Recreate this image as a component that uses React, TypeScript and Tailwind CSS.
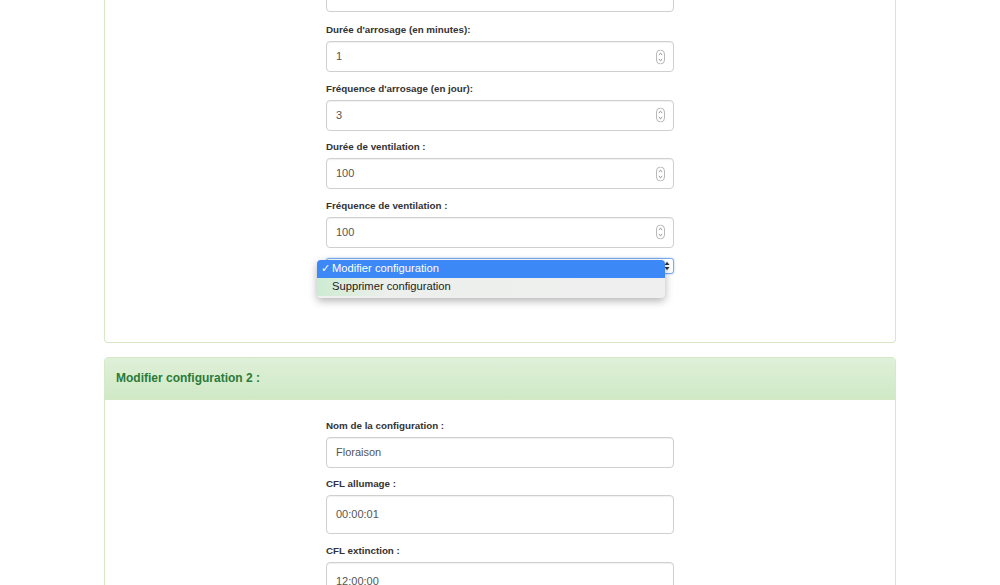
import React from "react";

const font = { fontFamily: '"Liberation Sans", Arial, sans-serif' };

function Spinner() {
  return (
    <svg width="9" height="15" viewBox="0 0 9 15" className="absolute right-[8px] top-1/2 -translate-y-1/2">
      <rect x="0.5" y="0.5" width="8" height="14" rx="4" fill="#fff" stroke="#b8b8b8" />
      <path d="M2.8 5.4 L4.5 3.8 L6.2 5.4" fill="none" stroke="#777" strokeWidth="0.9" />
      <path d="M2.8 9.6 L4.5 11.2 L6.2 9.6" fill="none" stroke="#777" strokeWidth="0.9" />
    </svg>
  );
}

function Label({ children, first }: { children: React.ReactNode; first?: boolean }) {
  return (
    <div
      className={
        (first ? "mt-[11px]" : "mt-[9.5px]") +
        " mb-[4px] text-[9.8px] font-bold leading-[14px] text-[#333]"
      }
    >
      {children}
    </div>
  );
}

function Field({ value, number, tall, cls }: { value: string; number?: boolean; tall?: boolean; cls?: string }) {
  return (
    <div
      className={
        "relative flex items-center rounded-[4px] border border-[#cfcfcf] bg-white pl-[9px] text-[11px] text-[#555] shadow-[inset_0_1px_1px_rgba(0,0,0,0.06)] " +
        (tall ? "h-[39px] " : "h-[31px] ") +
        (cls ?? "")
      }
    >
      {value}
      {number && <Spinner />}
    </div>
  );
}

export default function App() {
  return (
    <div className="h-[585px] overflow-hidden bg-white" style={font}>
      <div className="mx-auto w-[792px]">
        {/* first panel (top cut off) */}
        <div className="-mt-[19px] rounded-b-[4px] border border-t-0 border-[#d6e9c6] pb-[68px]">
          <div className="mx-auto w-[348px]">
            <Field value="" />
            <Label first>Durée d'arrosage (en minutes):</Label>
            <Field value="1" number />
            <Label>Fréquence d'arrosage (en jour):</Label>
            <Field value="3" number />
            <Label>Durée de ventilation :</Label>
            <Field value="100" number />
            <Label>Fréquence de ventilation :</Label>
            <Field value="100" number />

            <div className="relative mt-[10px]">
              <div className="relative h-[16px] rounded-[3px] border border-[#7aaef0] bg-white shadow-[0_0_2px_rgba(80,150,240,0.6)]">
                <svg width="6" height="10" viewBox="0 0 6 10" className="absolute right-[3px] top-[2px]">
                  <path d="M0.5 4 L3 0.8 L5.5 4 Z" fill="#333" />
                  <path d="M0.5 6 L3 9.2 L5.5 6 Z" fill="#333" />
                </svg>
              </div>
              <div className="absolute -left-[9px] top-[2px] z-10 w-[348px] overflow-hidden rounded-[4px] bg-[#efefef] pb-[2px] text-[11.2px] text-[#222] shadow-[0_3px_8px_rgba(0,0,0,0.3)]">
                <div className="flex h-[18px] items-center bg-[#3d88f7] pl-[4px] text-white">
                  <span className="w-[11px]">✓</span>
                  <span>Modifier configuration</span>
                </div>
                <div className="flex h-[18px] items-center bg-gradient-to-r from-[#cdebd2] via-[#ecefec] via-20% to-[#efefef] pl-[15px]">
                  Supprimer configuration
                </div>
              </div>
            </div>
          </div>
        </div>

        {/* second panel */}
        <div className="mt-[14px] rounded-[4px] border border-[#d6e9c6]">
          <div className="flex h-[42px] items-center rounded-t-[3px] border-b border-[#d6e9c6] bg-gradient-to-b from-[#dff0d8] to-[#cfe9c6] pl-[11px]">
            <span className="text-[12px] font-bold text-[#2b7a38]">Modifier configuration 2 :</span>
          </div>
          <div className="mx-auto w-[348px] pt-[8px]">
            <Label first>Nom de la configuration :</Label>
            <Field value="Floraison" cls="h-[30px]" />
            <Label>CFL allumage :</Label>
            <Field value="00:00:01" tall />
            <Label>CFL extinction :</Label>
            <Field value="12:00:00" tall />
            <div className="h-[60px]" />
          </div>
        </div>
      </div>
    </div>
  );
}
